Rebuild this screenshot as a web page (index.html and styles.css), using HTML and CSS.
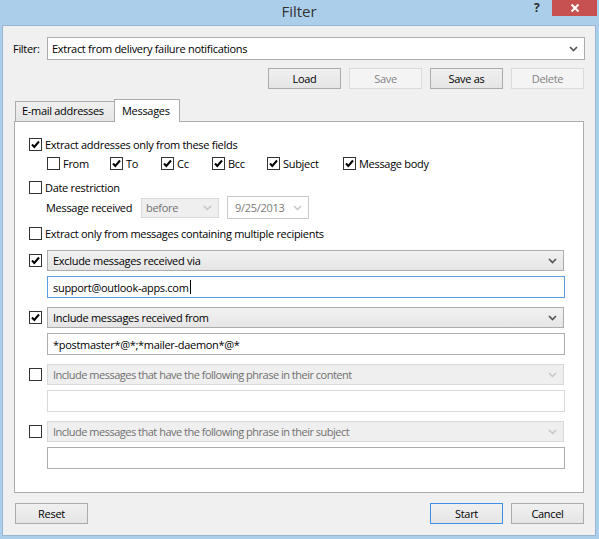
FILE: index.html
```html
<!DOCTYPE html>
<html lang="en">
  <head>
    <meta charset="UTF-8" />
    <title>Filter</title>
    <link rel="stylesheet" href="styles.css">
  </head>
  <body>
    <div class="window">
        <div class="titlebar">
            <span class="title">Filter</span>
            <span class="help">?</span>
            <span class="close">
                <svg width="10" height="10" viewBox="0 0 10 10"><path d="M1.5 1.5 L8.5 8.5 M8.5 1.5 L1.5 8.5" stroke="#fff" stroke-width="2" fill="none"/></svg>
            </span>
        </div>

        <div class="client">
            <div class="filter-row">
                <span class="filter-label">Filter:</span>
                <div class="combo combo-edit">
                    <span class="combo-text">Extract from delivery failure notifications</span>
                    <svg class="chev" width="9" height="6" viewBox="0 0 9 6"><path d="M1 1 L4.5 4.5 L8 1" stroke="#555" stroke-width="1.7" fill="none"/></svg>
                </div>
            </div>

            <div class="btn-row">
                <button class="btn">Load</button>
                <button class="btn" disabled>Save</button>
                <button class="btn">Save as</button>
                <button class="btn" disabled>Delete</button>
            </div>

            <div class="tabs">
                <div class="tab">E-mail addresses</div>
                <div class="tab active">Messages</div>
            </div>

            <div class="panel">
                <label class="check-row">
                    <span class="cb checked"><svg width="11" height="11" viewBox="0 0 11 11"><path d="M2 5.5 L4.3 8 L9 2.5" stroke="#000" stroke-width="2" fill="none"/></svg></span>
                    Extract addresses only from these fields
                </label>

                <div class="fields">
                    <label class="item"><span class="cb"></span>From</label>
                    <label class="item"><span class="cb checked"><svg width="11" height="11" viewBox="0 0 11 11"><path d="M2 5.5 L4.3 8 L9 2.5" stroke="#000" stroke-width="2" fill="none"/></svg></span>To</label>
                    <label class="item"><span class="cb checked"><svg width="11" height="11" viewBox="0 0 11 11"><path d="M2 5.5 L4.3 8 L9 2.5" stroke="#000" stroke-width="2" fill="none"/></svg></span>Cc</label>
                    <label class="item"><span class="cb checked"><svg width="11" height="11" viewBox="0 0 11 11"><path d="M2 5.5 L4.3 8 L9 2.5" stroke="#000" stroke-width="2" fill="none"/></svg></span>Bcc</label>
                    <label class="item"><span class="cb checked"><svg width="11" height="11" viewBox="0 0 11 11"><path d="M2 5.5 L4.3 8 L9 2.5" stroke="#000" stroke-width="2" fill="none"/></svg></span>Subject</label>
                    <label class="item"><span class="cb checked"><svg width="11" height="11" viewBox="0 0 11 11"><path d="M2 5.5 L4.3 8 L9 2.5" stroke="#000" stroke-width="2" fill="none"/></svg></span>Message body</label>
                </div>

                <label class="check-row date-row">
                    <span class="cb"></span>
                    Date restriction
                </label>

                <div class="received-row">
                    <span class="received-label">Message received</span>
                    <div class="combo combo-off before">
                        <span class="combo-text">before</span>
                        <svg class="chev" width="9" height="6" viewBox="0 0 9 6"><path d="M1 1 L4.5 4.5 L8 1" stroke="#c4c4c4" stroke-width="1.5" fill="none"/></svg>
                    </div>
                    <div class="combo date-box">
                        <span class="combo-text">9/25/2013</span>
                        <svg class="chev" width="9" height="6" viewBox="0 0 9 6"><path d="M1 1 L4.5 4.5 L8 1" stroke="#c4c4c4" stroke-width="1.5" fill="none"/></svg>
                    </div>
                </div>

                <label class="check-row multi-row">
                    <span class="cb"></span>
                    Extract only from messages containing multiple recipients
                </label>

                <div class="group first">
                    <div class="combo-row">
                        <span class="cb"><svg width="11" height="11" viewBox="0 0 11 11"><path d="M2 5.5 L4.3 8 L9 2.5" stroke="#000" stroke-width="2" fill="none"/></svg></span>
                        <div class="combo combo-on">
                            <span class="combo-text">Exclude messages received via</span>
                            <svg class="chev" width="9" height="6" viewBox="0 0 9 6"><path d="M1 1 L4.5 4.5 L8 1" stroke="#555" stroke-width="1.7" fill="none"/></svg>
                        </div>
                    </div>
                    <div class="textbox focused">support@outlook-apps.com<span class="caret"></span></div>
                </div>

                <div class="group">
                    <div class="combo-row">
                        <span class="cb"><svg width="11" height="11" viewBox="0 0 11 11"><path d="M2 5.5 L4.3 8 L9 2.5" stroke="#000" stroke-width="2" fill="none"/></svg></span>
                        <div class="combo combo-on">
                            <span class="combo-text">Include messages received from</span>
                            <svg class="chev" width="9" height="6" viewBox="0 0 9 6"><path d="M1 1 L4.5 4.5 L8 1" stroke="#555" stroke-width="1.7" fill="none"/></svg>
                        </div>
                    </div>
                    <div class="textbox">*postmaster*@*;*mailer-daemon*@*</div>
                </div>

                <div class="group">
                    <div class="combo-row">
                        <span class="cb"></span>
                        <div class="combo combo-off">
                            <span class="combo-text small">Include messages that have the following phrase in their content</span>
                            <svg class="chev" width="9" height="6" viewBox="0 0 9 6"><path d="M1 1 L4.5 4.5 L8 1" stroke="#c4c4c4" stroke-width="1.5" fill="none"/></svg>
                        </div>
                    </div>
                    <div class="textbox disabled"></div>
                </div>

                <div class="group">
                    <div class="combo-row">
                        <span class="cb"></span>
                        <div class="combo combo-off">
                            <span class="combo-text small">Include messages that have the following phrase in their subject</span>
                            <svg class="chev" width="9" height="6" viewBox="0 0 9 6"><path d="M1 1 L4.5 4.5 L8 1" stroke="#c4c4c4" stroke-width="1.5" fill="none"/></svg>
                        </div>
                    </div>
                    <div class="textbox"></div>
                </div>
            </div>

            <div class="footer">
                <button class="btn">Reset</button>
                <span class="spacer"></span>
                <button class="btn default">Start</button>
                <button class="btn">Cancel</button>
            </div>
        </div>
    </div>
  </body>
</html>
```

FILE: styles.css
```css
* {
    margin: 0;
    padding: 0;
    box-sizing: border-box;
}

body {
    font-family: 'Open Sans', 'Noto Sans', sans-serif;
    font-size: 11px;
    letter-spacing: -0.3px;
    color: #000;
    background: #abcfea;
    width: 599px;
    height: 539px;
    overflow: hidden;
}

.window {
    width: 599px;
    height: 539px;
    background: #abcfea;
    padding: 0 3px 3px 2px;
    display: flex;
    flex-direction: column;
}

/* title bar */
.titlebar {
    height: 25px;
    position: relative;
    text-align: center;
}

.title {
    font-size: 15px;
    line-height: 22px;
    letter-spacing: 0;
    color: #333;
}

.help {
    position: absolute;
    left: 532px;
    top: 0;
    font-size: 12px;
    font-weight: bold;
    line-height: 16px;
    letter-spacing: 0;
    color: #2b2b2b;
}

.close {
    position: absolute;
    left: 550px;
    top: 0;
    width: 45px;
    height: 16px;
    background: #c75050;
    display: flex;
    align-items: center;
    justify-content: center;
}

/* dialog body */
.client {
    flex: 1;
    background: #f0f0f0;
    border: 1px solid #98b6d3;
    padding: 11px 10px 0 10px;
    display: flex;
    flex-direction: column;
}

.filter-row {
    display: flex;
    align-items: center;
}

.filter-label {
    width: 34px;
}

.combo {
    height: 21px;
    border: 1px solid #acacac;
    display: flex;
    align-items: center;
    padding: 0 6px 0 5px;
    white-space: nowrap;
    overflow: hidden;
}

.combo-text {
    flex: 1;
}

.combo-edit {
    flex: 1;
    height: 23px;
    background: #fff;
    border-color: #abadb3;
    padding-left: 4px;
}

.combo-on {
    flex: 1;
    background: linear-gradient(#f2f2f2, #e5e5e5);
}

.combo-off {
    flex: 1;
    background: #efefef;
    border-color: #d9d9d9;
    color: #707070;
}

.combo-text.small {
    letter-spacing: -0.5px;
}

.btn-row {
    display: flex;
    justify-content: flex-end;
    gap: 8px;
    margin-top: 8px;
    margin-right: 1px;
}

.btn {
    width: 73px;
    height: 21px;
    font-family: inherit;
    font-size: 11px;
    letter-spacing: -0.3px;
    color: #000;
    border: 1px solid #acacac;
    background: linear-gradient(#f0f0f0, #e5e5e5);
}

.btn:disabled {
    background: #f4f4f4;
    border-color: #dadada;
    color: #838383;
}

.btn.default {
    border-color: #3c8fe5;
}

/* tabs */
.tabs {
    display: flex;
    align-items: flex-end;
    margin-top: 10px;
    padding-left: 2px;
}

.tab {
    width: 100px;
    height: 20px;
    padding-left: 6px;
    border: 1px solid #acacac;
    border-bottom: none;
    background: linear-gradient(#f0f0f0, #e5e5e5);
    line-height: 18px;
    white-space: nowrap;
    overflow: hidden;
}

.tab.active {
    width: 66px;
    height: 23px;
    margin-bottom: -1px;
    margin-left: -1px;
    background: #fff;
    line-height: 22px;
    padding-left: 7px;
    position: relative;
    z-index: 1;
}

.panel {
    height: 372px;
    margin: 0 1px;
    background: #fff;
    border: 1px solid #acacac;
    padding: 14px 19px 0 14px;
}

.check-row {
    display: flex;
    align-items: center;
    gap: 3px;
    height: 16px;
}

.cb {
    width: 13px;
    height: 13px;
    border: 1px solid #333;
    background: #fff;
    display: flex;
    align-items: center;
    justify-content: center;
    flex-shrink: 0;
}

.fields {
    display: grid;
    grid-template-columns: 63px 51px 51px 55px 76px auto;
    margin-top: 3px;
    padding-left: 18px;
    height: 16px;
}

.item {
    display: flex;
    align-items: center;
    gap: 3px;
}

.date-row {
    margin-top: 8px;
}

.received-row {
    display: flex;
    align-items: center;
    height: 23px;
    margin-top: 1px;
    padding-left: 17px;
}

.received-label {
    width: 95px;
}

.before {
    flex: none;
    width: 78px;
    height: 20px;
    padding-left: 4px;
}

.date-box {
    width: 82px;
    height: 23px;
    margin-left: 8px;
    background: #fff;
    border-color: #c8c8c8;
    color: #7a7a7a;
    padding-left: 7px;
}

.multi-row {
    margin-top: 6px;
}

.group {
    margin-top: 9px;
}

.combo-row {
    display: flex;
    align-items: center;
    gap: 5px;
}

.textbox {
    height: 22px;
    margin: 5px -1px 0 18px;
    border: 1px solid #abadb3;
    background: #fff;
    padding-left: 5px;
    display: flex;
    align-items: center;
}

.textbox.focused {
    border-color: #569de5;
}

.textbox.disabled {
    border-color: #d9d9d9;
}

.caret {
    width: 1px;
    height: 14px;
    background: #000;
    margin-left: 1px;
}

.footer {
    display: flex;
    gap: 8px;
    margin-top: 10px;
    padding: 0 1px 0 2px;
}

.spacer {
    flex: 1;
}
```
